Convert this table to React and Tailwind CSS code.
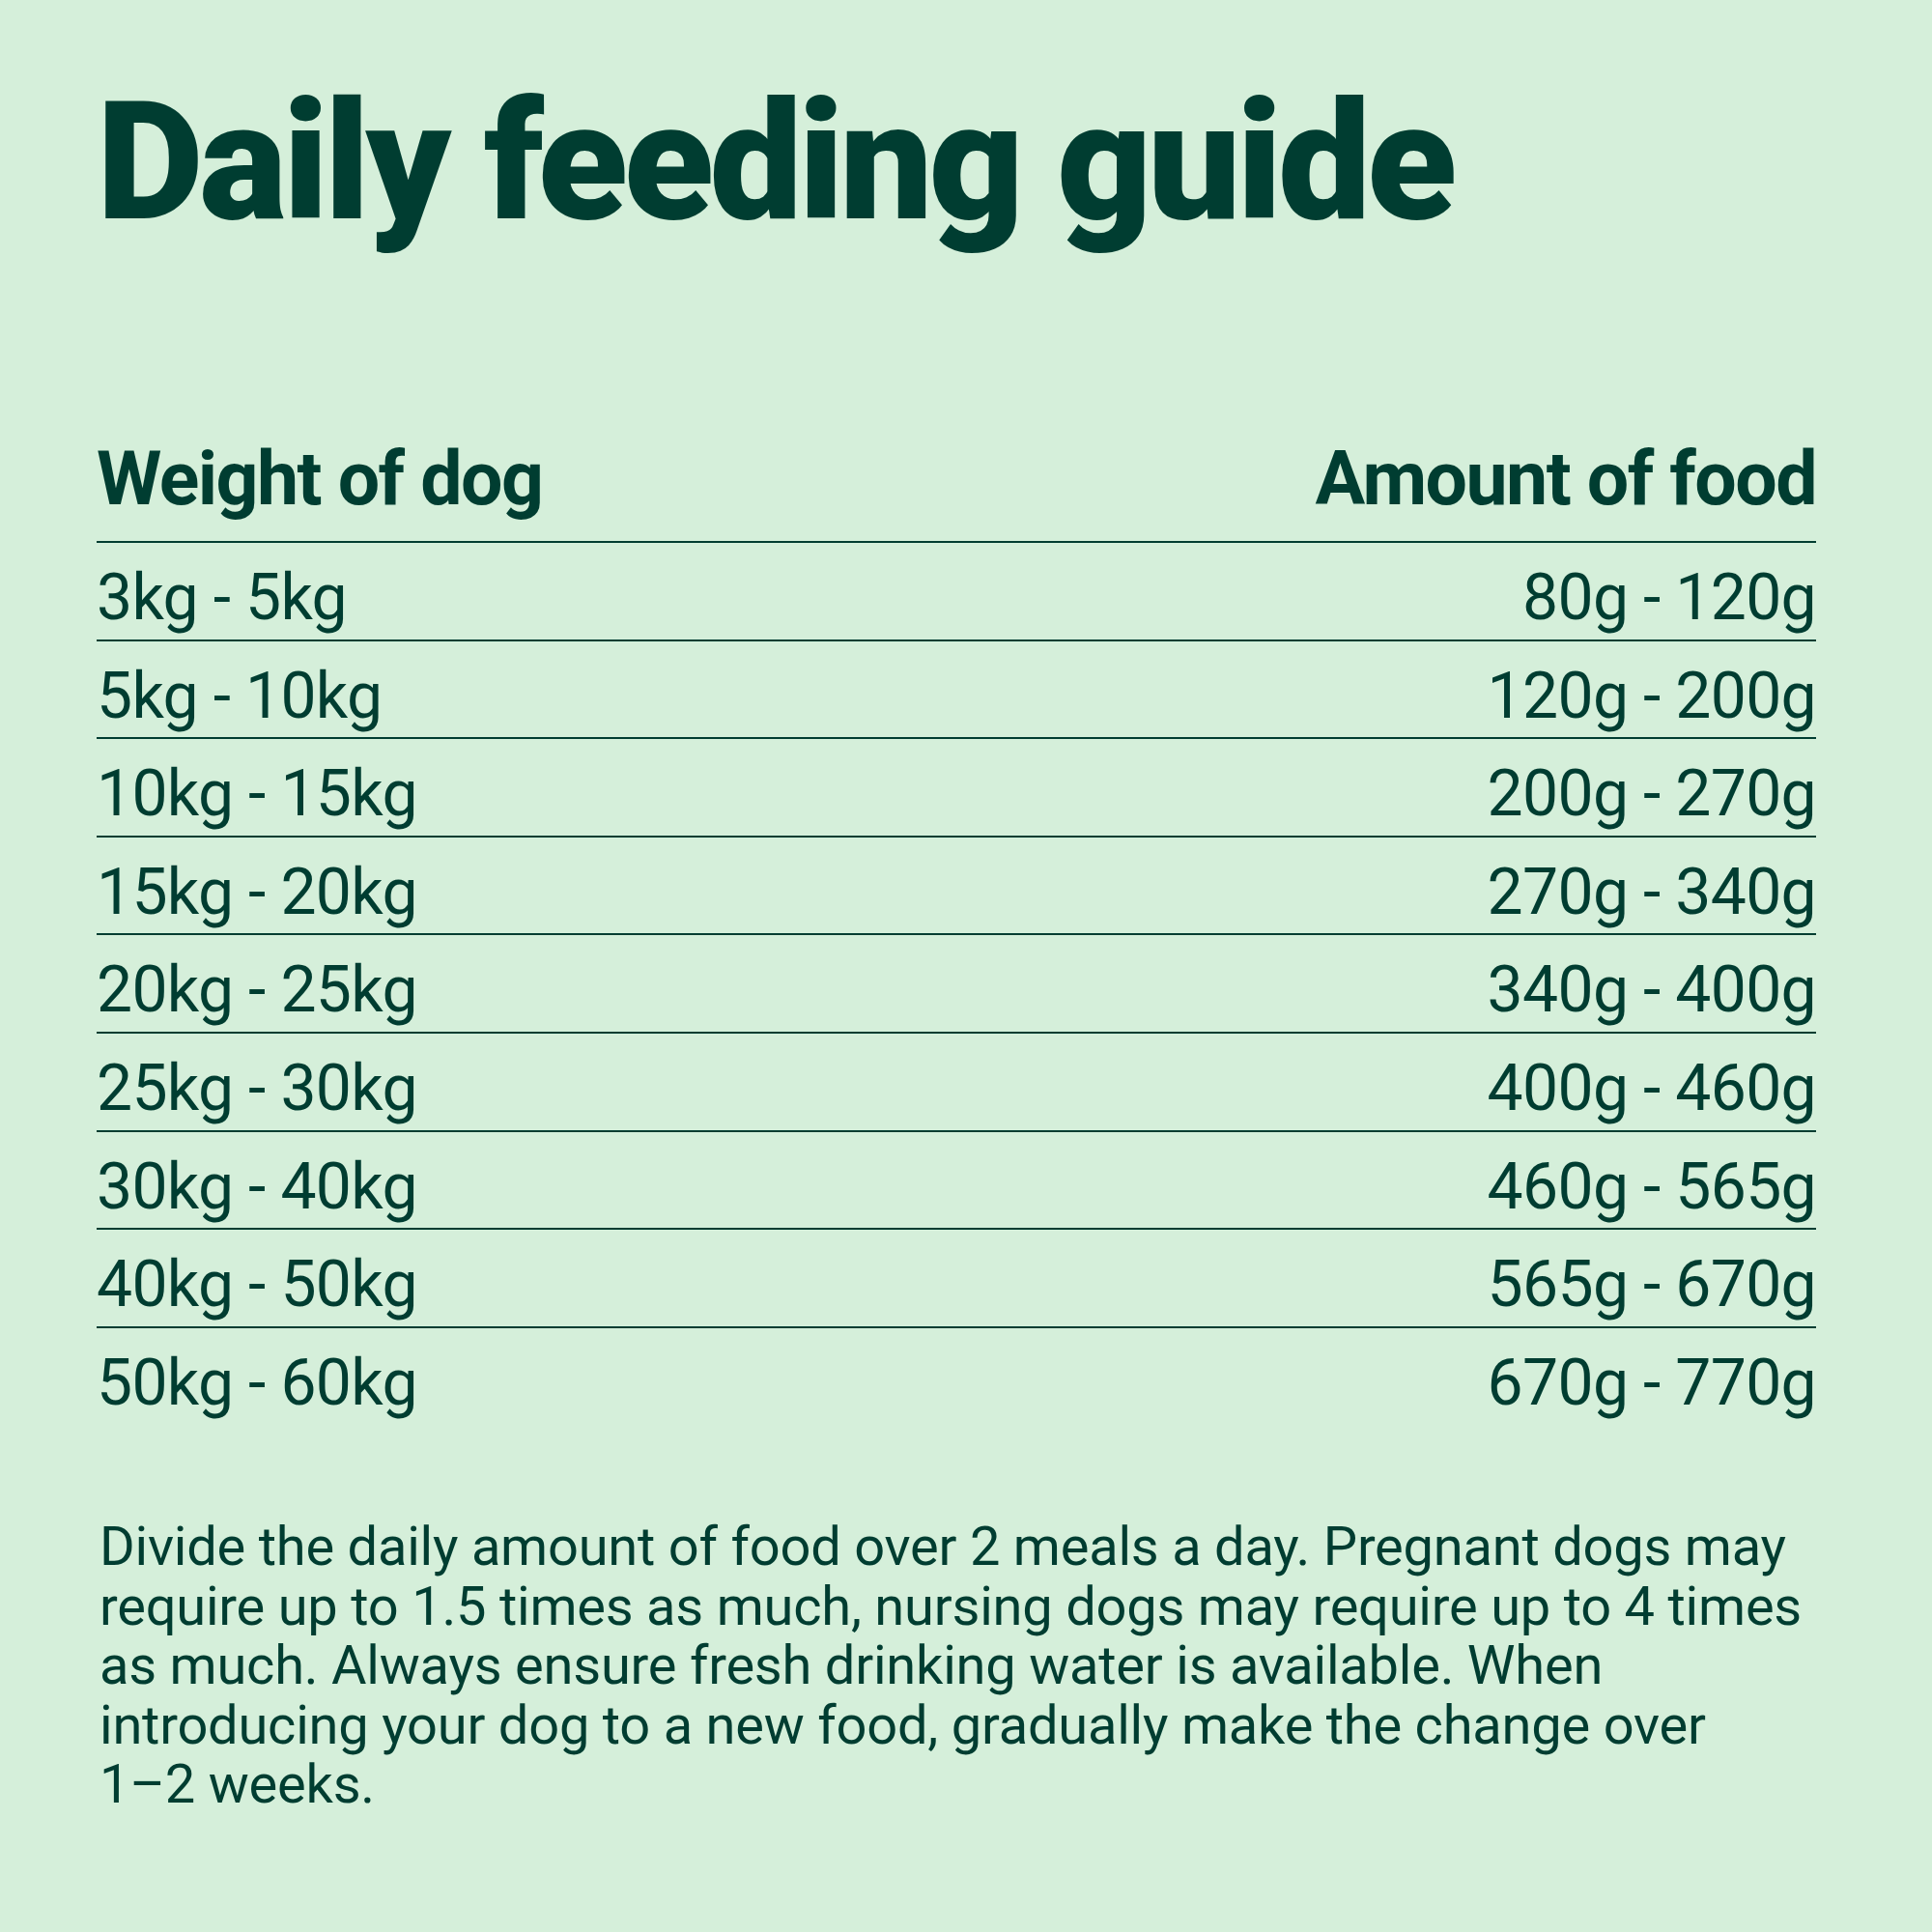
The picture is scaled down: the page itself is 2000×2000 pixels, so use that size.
const rows = [
  ['3kg - 5kg', '80g - 120g'],
  ['5kg - 10kg', '120g - 200g'],
  ['10kg - 15kg', '200g - 270g'],
  ['15kg - 20kg', '270g - 340g'],
  ['20kg - 25kg', '340g - 400g'],
  ['25kg - 30kg', '400g - 460g'],
  ['30kg - 40kg', '460g - 565g'],
  ['40kg - 50kg', '565g - 670g'],
  ['50kg - 60kg', '670g - 770g'],
]

export default function App() {
  return (
    <div className="w-[2000px] h-[2000px] bg-[#d5efda] text-[#003d31] pl-[100px] pr-[120px] pt-[82px] font-['Roboto',sans-serif]">
      <h1 className="text-[171px] leading-none font-black tracking-[-0.025em]">
        Daily feeding guide
      </h1>

      <div className="mt-[205px]">
        <div className="flex justify-between items-start h-[102px] text-[77px] leading-none font-bold tracking-[-0.02em]">
          <span>Weight of dog</span>
          <span>Amount of food</span>
        </div>
        {rows.map(([weight, amount]) => (
          <div
            key={weight}
            className="flex justify-between items-start h-[101.6px] border-t-2 border-[#003d31] pt-[24px] text-[66px] leading-none tracking-[-0.01em]"
          >
            <span>{weight}</span>
            <span>{amount}</span>
          </div>
        ))}
      </div>

      <p className="mt-[97px] text-[56px] leading-[61.5px] tracking-[-0.004em] whitespace-nowrap pl-[3px]">
        Divide the daily amount of food over 2 meals a day. Pregnant dogs may<br />
        require up to 1.5 times as much, nursing dogs may require up to 4 times<br />
        as much. Always ensure fresh drinking water is available. When<br />
        introducing your dog to a new food, gradually make the change over<br />
        1–2 weeks.
      </p>
    </div>
  )
}
